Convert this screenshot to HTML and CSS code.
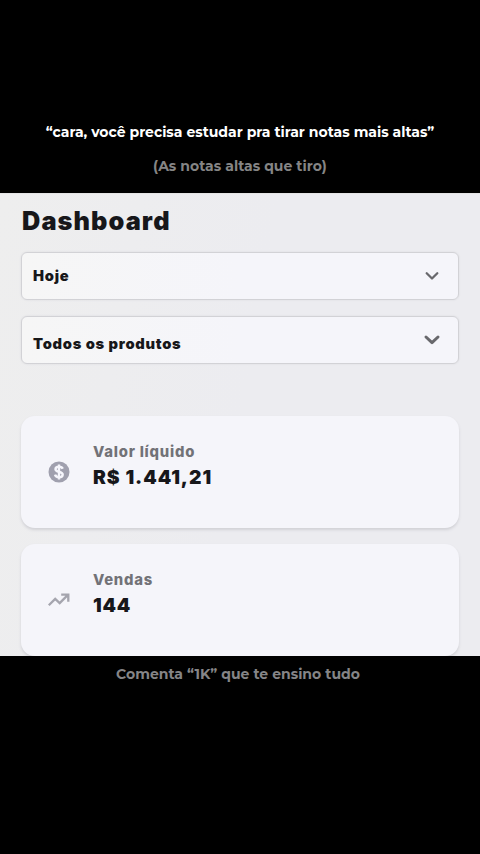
FILE: index.html
```html
<!DOCTYPE html>
<html lang="pt-BR">
<head>
<meta charset="utf-8">
<title>Dashboard</title>
<link rel="stylesheet" href="styles.css">
</head>
<body>
<header class="intro">
  <p class="quote">“cara, você precisa estudar pra tirar notas mais altas”</p>
  <p class="reply">(As notas altas que tiro)</p>
</header>
<main class="dashboard">
  <h1>Dashboard</h1>
  <div class="select">
    <span>Hoje</span>
    <svg class="chevron" viewBox="0 0 20 14"><path d="M4.7 4.3 10 9.5l5.3-5.2"/></svg>
  </div>
  <div class="select products">
    <span>Todos os produtos</span>
    <svg class="chevron bold" viewBox="0 0 20 14"><path d="M4 4 10 9.6 16 4"/></svg>
  </div>
  <section class="card">
    <svg class="icon" viewBox="0 0 24 24"><circle cx="12" cy="12" r="10.5"/><path class="dollar" d="M12 4.6v14.8M15.7 8.8C15.1 7.3 13.8 6.8 12 6.8c-2.2 0-3.5 1-3.5 2.5 0 3.7 7.2 1.5 7.2 5.2 0 1.6-1.4 2.7-3.7 2.7-2 0-3.5-.8-4-2.5"/></svg>
    <div><p class="label">Valor líquido</p><p class="value money">R$ 1.441,21</p></div>
  </section>
  <section class="card">
    <svg class="icon" viewBox="0 0 24 24"><path class="trend" d="m1.8 17.3 6.4-6.4 4.5 4.2 8.2-8.2M14.2 6.6h7.1v7.2"/></svg>
    <div><p class="label">Vendas</p><p class="value">144</p></div>
  </section>
</main>
<footer>Comenta “1K” que te ensino tudo</footer>
</body>
</html>
```
FILE: styles.css
```css
* { box-sizing: border-box; }
body { margin: 0; width: 480px; height: 854px; overflow: hidden; background: #000; font-family: Inter, sans-serif; }
p, h1 { margin: 0; white-space: nowrap; }
.intro { height: 193px; padding-top: 122px; text-align: center; font-family: Montserrat, Inter, sans-serif; font-weight: 700; font-size: 14px; line-height: 20px; }
.quote { color: #fff; letter-spacing: 0; }
.reply { color: #858585; margin-top: 14px; letter-spacing: .03px; }
.dashboard { height: 463px; overflow: hidden; padding: 10px 21px 0; background: linear-gradient(100deg, #eeeeee 0%, #ececf0 50%, #ececf0 100%); border-top: 1px solid #e4e4e4; color: #17171a; }
h1 { padding-left: 1px; font-size: 25.3px; font-weight: 900; line-height: 34px; letter-spacing: 1.1px; }
.select { display: flex; align-items: center; justify-content: space-between; height: 48px; margin-top: 14px; padding: 0 16px 0 11px; border: 1px solid #d2d2d6; border-radius: 6px; background: linear-gradient(90deg, #f6f6f6, #f5f5fa 50%); box-shadow: 0 0 2px #d8d8dc; font-size: 14.7px; font-weight: 900; line-height: 20px; letter-spacing: .72px; }
.products { margin: 16px 0 52px; }
.products span { padding-top: 8px; }
.chevron { width: 20px; height: 14px; fill: none; stroke: #68686c; stroke-width: 2.3; stroke-linecap: round; stroke-linejoin: round; }
.bold { stroke-width: 3; margin-bottom: 1px; }
.card { display: flex; height: 112px; margin-bottom: 16px; padding: 25px 26px; border-radius: 14px; background: #f5f5fa; box-shadow: 0 2px 3px #d1d1d6; }
.icon { width: 24px; height: 24px; margin: 19px 22px 0 0; fill: #a0a0ae; }
.dollar { fill: none; stroke: #f6f6fc; stroke-width: 2.4; }
.trend { fill: none; stroke: #a5a5ae; stroke-width: 2.3; }
.label { padding-top: 1px; color: #727277; font-size: 14.8px; font-weight: 800; line-height: 20px; letter-spacing: .78px; }
.value { font-size: 19.3px; font-weight: 900; line-height: 30px; letter-spacing: .8px; }
.money { letter-spacing: .95px; }
footer { padding: 8px 4px 0 0; text-align: center; font-family: Montserrat, Inter, sans-serif; color: #858587; font-size: 14px; font-weight: 700; line-height: 20px; letter-spacing: .02px; }
```
